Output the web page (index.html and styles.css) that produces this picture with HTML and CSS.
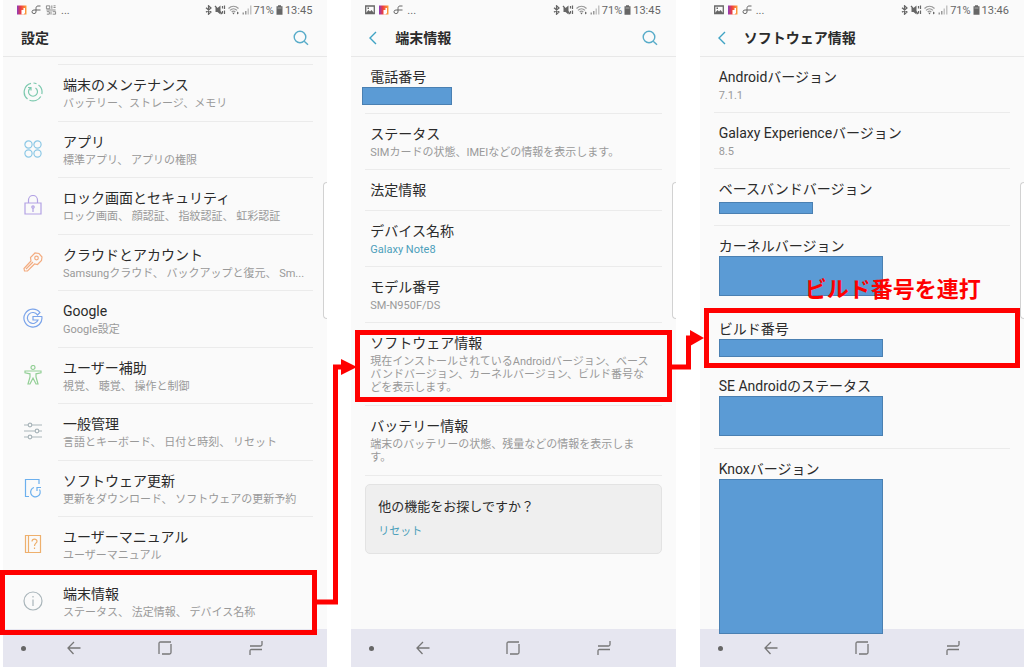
FILE: index.html
```
<!DOCTYPE html>
<html lang="ja">
  <head>
    <meta charset="utf-8">
    <title>端末情報</title>
    <link rel="stylesheet" href="styles.css">
  </head>

  <body>
    <!-- shared icons -->
    <svg class="sprite" aria-hidden="true">
      <symbol id="i-insta" viewBox="0 0 10 10">
        <linearGradient id="g" x1="0" y1="0" x2="1" y2="0">
          <stop offset="0" stop-color="#8a3ac0" />
          <stop offset="0.4" stop-color="#ee3d3c" />
          <stop offset="1" stop-color="#ffa63a" />
        </linearGradient>
        <path fill="url(#g)" d="M0 .5h9.500v9H0z" />
        <path fill="#fff" d="M4.500 5h2V3h1.500v5L6.500 9.500h-2z" />
      </symbol>
      <symbol id="i-note" viewBox="0 0 10 10">
        <path fill="none" stroke="#666" d="M9.500 1H7C5.500 1 5 2 5 3.500V7a2 1.800 0 1 1-2-2h6.500" />
      </symbol>
      <symbol id="i-pic" viewBox="0 0 10 10">
        <path fill="none" stroke="#666" stroke-width="1.300" d="M.7 1h8.600v7.500H.7z" />
        <path fill="#666" d="M1 8l2.500-3 1.500 1.500L6.500 5 9 8zM2.500 2.500h1.500V4H2.500z" />
      </symbol>
      <symbol id="i-bt" viewBox="0 0 7 10">
        <path fill="none" stroke="#666" stroke-width="1.200" d="M1 2.800l5 4.200-2.500 2.300V.7L6 3 1 7.200" />
      </symbol>
      <symbol id="i-mute" viewBox="0 0 11 10">
        <path fill="#666" d="M1 3h2l3-2.500v9L3 7H1z" />
        <path fill="none" stroke="#666" stroke-width="1.200" d="M.5 1l7 8M8 1v2.500M8 6v2.500M10 .5v3.500M10 5.500v3.500" />
      </symbol>
      <symbol id="i-wifi" viewBox="0 0 12 10">
        <path fill="none" stroke="#999" stroke-width="1.200" d="M.5 3.500c3-3 7-3 10 0M2 5.300c2-2 5-2 7 0M3.700 7c1-1 2.600-1 3.600 0" />
        <path fill="#666" d="M4.300 7.800h2.400L5.500 9.500zM9 6.500l2 1.500-2 1.500z" />
      </symbol>
      <symbol id="i-signal" viewBox="0 0 10 10">
        <path fill="#999" d="M.5 7.500h1.500v2H.5zM3 6h1.500v3.500H3z" />
        <path fill="#c4c4c4" d="M5.500 3.500h1.500v6H5.500zM8 .5h1.500v9H8z" />
      </symbol>
      <symbol id="i-battery" viewBox="0 0 7 10">
        <path fill="#666" d="M2 .3h3v1h1.500v8.400H.5V1.300H2z" />
        <path stroke="#aaa" d="M1.500 3h4" />
      </symbol>
      <symbol id="i-search" viewBox="0 0 16 16">
        <circle cx="7" cy="7" r="5.800" />
        <path d="M11.200 11.200l3.800 3.600" />
      </symbol>
      <symbol id="i-chevron" viewBox="0 0 8 14">
        <path d="M7 1L1 7l6 6" />
      </symbol>
      <symbol id="i-back" viewBox="0 0 14 14">
        <path d="M13.500 7H1M7 1L1 7l5.500 6" />
      </symbol>
      <symbol id="i-home" viewBox="0 0 14 14">
        <path d="M1 13V2.500C1 1.500 1.500 1 2.500 1H13M13 3v8.500c0 1-.5 1.500-1.500 1.500H4" />
      </symbol>
      <symbol id="i-recent" viewBox="0 0 14 14">
        <path d="M1 5h10.500c1 0 1.500-.5 1.500-1.500V0M13 8.500H2.500C1.500 8.500 1 9 1 10v4" />
      </symbol>
    </svg>

    <main class="screens">
      <section class="phone">
        <div class="status">
          <svg class="w10"><use href="#i-insta" /></svg>
          <svg class="w10"><use href="#i-note" /></svg>
          <svg class="w12" viewBox="0 0 12 12">
            <path fill="none" stroke="#777" d="M.5 1h4v3.500h-4zM7 .5v4M9 1h2.500M9 3h2.500M.5 6h11M1 8h3v3H1M6 7.500v4M8 8h3.500v3H8" />
          </svg>
          <span>...</span>
          <span class="status-right">
            <svg class="w7"><use href="#i-bt" /></svg>
            <svg class="w12"><use href="#i-mute" /></svg>
            <svg class="w12"><use href="#i-wifi" /></svg>
            <svg class="w10"><use href="#i-signal" /></svg>
            <span>71%</span>
            <svg class="w7"><use href="#i-battery" /></svg>
            <span>13:45</span>
          </span>
        </div>
        <header class="bar">
          <h1>設定</h1>
          <button class="search" aria-label="検索"><svg><use href="#i-search" /></svg></button>
        </header>
        <ul class="list settings">
          <li>
            <svg class="icon green" viewBox="0 0 20 20">
              <path d="M8 1.300A9 9 0 0 0 4.500 17M6.500 18.200a9 9 0 0 0 11.300-3.700M18.800 12A9 9 0 0 0 15.500 3M13.500 1.800a9 9 0 0 0-3-.8" />
              <path d="M12.500 6a4.500 4.500 0 1 1-5 0M5 5.500h3V8.500" />
            </svg>
            <a href="#"><span class="title">端末のメンテナンス</span><span class="sub">バッテリー、ストレージ、メモリ</span></a>
          </li>
          <li>
            <svg class="icon sky" viewBox="0 0 20 20">
              <circle cx="5.500" cy="5.500" r="3.600" /><circle cx="14.500" cy="5.500" r="3.600" />
              <circle cx="5.500" cy="14.500" r="3.600" /><circle cx="14.500" cy="14.500" r="3.600" />
            </svg>
            <a href="#"><span class="title">アプリ</span><span class="sub">標準アプリ、 アプリの権限</span></a>
          </li>
          <li>
            <svg class="icon violet" viewBox="0 0 20 20">
              <path d="M2 8h16v11H2zM5.500 8V5a4.500 4.500 0 0 1 9 0v3M10 13v4" />
              <circle cx="10" cy="12" r="1.200" />
            </svg>
            <a href="#"><span class="title">ロック画面とセキュリティ</span><span class="sub">ロック画面、 顔認証、 指紋認証、 虹彩認証</span></a>
          </li>
          <li>
            <svg class="icon orange" viewBox="0 0 20 20">
              <path d="M8 9L7.500 5.500 12 1l4 .5 3 3.500-.5 3.500-4 4-3-.5-7 7H1.500L1 16.500zM3 17l7-7" />
              <circle cx="13.500" cy="6" r="1.800" />
            </svg>
            <a href="#"><span class="title">クラウドとアカウント</span><span class="sub">Samsungクラウド、 バックアップと復元、 Sm...</span></a>
          </li>
          <li>
            <svg class="icon blue" viewBox="0 0 20 20">
              <path d="M17 4.500A9 9 0 1 0 18.800 8.500H10v3.500h5a5.500 5.500 0 1 1-.5-5z" />
            </svg>
            <a href="#"><span class="title">Google</span><span class="sub">Google設定</span></a>
          </li>
          <li>
            <svg class="icon leaf" viewBox="0 0 20 20">
              <circle cx="10" cy="2.500" r="2" />
              <path d="M2 6h16v1.800l-5 1V12l2 7h-2l-3-6-3 6H5l2-7V8.800l-5-1z" />
            </svg>
            <a href="#"><span class="title">ユーザー補助</span><span class="sub">視覚、 聴覚、 操作と制御</span></a>
          </li>
          <li>
            <svg class="icon grey" viewBox="0 0 20 20">
              <path d="M1 4h4M9 4h10M1 10h11M16 10h3M1 16h4M9 16h10" />
              <circle cx="7" cy="4" r="1.800" /><circle cx="14" cy="10" r="1.800" /><circle cx="7" cy="16" r="1.800" />
            </svg>
            <a href="#"><span class="title">一般管理</span><span class="sub">言語とキーボード、 日付と時刻、 リセット</span></a>
          </li>
          <li>
            <svg class="icon azure" viewBox="0 0 20 20">
              <path d="M16 6V1.500H2.500v17H6M11 9.500a4.800 4.800 0 1 0 5.500 2M14 13V9.500h4" />
            </svg>
            <a href="#"><span class="title">ソフトウェア更新</span><span class="sub">更新をダウンロード、 ソフトウェアの更新予約</span></a>
          </li>
          <li>
            <svg class="icon amber" viewBox="0 0 20 20">
              <path d="M2.500 1.500h15v17h-15zM5.500 1.500v17M9 7.500c0-3 5-3 5-.3 0 2-2.500 2-2.500 4.800M11.500 13.500V15" />
            </svg>
            <a href="#"><span class="title">ユーザーマニュアル</span><span class="sub">ユーザーマニュアル</span></a>
          </li>
          <li class="hit hit-device">
            <svg class="icon grey" viewBox="0 0 20 20">
              <circle cx="10" cy="10" r="9" />
              <path d="M10 8.500V15M10 5v1.500" />
            </svg>
            <a href="#"><span class="title">端末情報</span><span class="sub">ステータス、 法定情報、 デバイス名称</span></a>
          </li>
        </ul>
        <span class="edge"></span>
        <nav class="nav">
          <i class="dot"></i>
          <button aria-label="戻る"><svg><use href="#i-back" /></svg></button>
          <button aria-label="ホーム"><svg><use href="#i-home" /></svg></button>
          <button aria-label="履歴"><svg><use href="#i-recent" /></svg></button>
        </nav>
      </section>

      <section class="phone">
        <div class="status">
          <svg class="w10"><use href="#i-pic" /></svg>
          <svg class="w10"><use href="#i-insta" /></svg>
          <svg class="w10"><use href="#i-note" /></svg>
          <span>...</span>
          <span class="status-right">
            <svg class="w7"><use href="#i-bt" /></svg>
            <svg class="w12"><use href="#i-mute" /></svg>
            <svg class="w12"><use href="#i-wifi" /></svg>
            <svg class="w10"><use href="#i-signal" /></svg>
            <span>71%</span>
            <svg class="w7"><use href="#i-battery" /></svg>
            <span>13:45</span>
          </span>
        </div>
        <header class="bar">
          <button class="back" aria-label="戻る"><svg><use href="#i-chevron" /></svg></button>
          <h1>端末情報</h1>
          <button class="search" aria-label="検索"><svg><use href="#i-search" /></svg></button>
        </header>
        <ul class="list">
          <li><span class="title">電話番号</span><span class="mask mask-phone"></span></li>
          <li><a href="#"><span class="title">ステータス</span><span class="sub">SIMカードの状態、IMEIなどの情報を表示します。</span></a></li>
          <li><a href="#"><span class="title">法定情報</span></a></li>
          <li><a href="#"><span class="title">デバイス名称</span><span class="sub accent">Galaxy Note8</span></a></li>
          <li><span class="title">モデル番号</span><span class="sub">SM-N950F/DS</span></li>
          <li class="hit hit-software">
            <a href="#"><span class="title">ソフトウェア情報</span><span class="sub long">現在インストールされているAndroidバージョン、ベースバンドバージョン、カーネルバージョン、ビルド番号などを表示します。</span></a>
            <svg class="arrow arrow-in" viewBox="0 0 40 247">
              <path class="line" d="M0 243h18.500V8H26" />
              <path class="head" d="M24 0l16 8-16 8z" />
            </svg>
            <svg class="arrow arrow-out" viewBox="0 0 32 41">
              <path class="line" d="M0 37h16.500V8H20" />
              <path class="head" d="M18 0l14 8-14 8z" />
            </svg>
          </li>
          <li><a href="#"><span class="title">バッテリー情報</span><span class="sub long">端末のバッテリーの状態、残量などの情報を表示します。</span></a></li>
        </ul>
        <aside class="card">
          <h2>他の機能をお探しですか？</h2>
          <a class="accent" href="#">リセット</a>
        </aside>
        <span class="edge"></span>
        <nav class="nav">
          <i class="dot"></i>
          <button aria-label="戻る"><svg><use href="#i-back" /></svg></button>
          <button aria-label="ホーム"><svg><use href="#i-home" /></svg></button>
          <button aria-label="履歴"><svg><use href="#i-recent" /></svg></button>
        </nav>
      </section>

      <section class="phone">
        <div class="status">
          <svg class="w10"><use href="#i-pic" /></svg>
          <svg class="w10"><use href="#i-insta" /></svg>
          <svg class="w10"><use href="#i-note" /></svg>
          <span>...</span>
          <span class="status-right">
            <svg class="w7"><use href="#i-bt" /></svg>
            <svg class="w12"><use href="#i-mute" /></svg>
            <svg class="w12"><use href="#i-wifi" /></svg>
            <svg class="w10"><use href="#i-signal" /></svg>
            <span>71%</span>
            <svg class="w7"><use href="#i-battery" /></svg>
            <span>13:46</span>
          </span>
        </div>
        <header class="bar">
          <button class="back" aria-label="戻る"><svg><use href="#i-chevron" /></svg></button>
          <h1>ソフトウェア情報</h1>
        </header>
        <ul class="list">
          <li><span class="title">Androidバージョン</span><span class="sub">7.1.1</span></li>
          <li><span class="title">Galaxy Experienceバージョン</span><span class="sub">8.5</span></li>
          <li><span class="title">ベースバンドバージョン</span><span class="mask mask-baseband"></span></li>
          <li class="tall"><span class="title">カーネルバージョン</span><span class="mask mask-block"></span></li>
          <li class="hit hit-build">
            <strong class="callout">ビルド番号を連打</strong>
            <span class="title">ビルド番号</span><span class="mask mask-line"></span>
          </li>
          <li class="tall"><span class="title">SE Androidのステータス</span><span class="mask mask-block"></span></li>
          <li class="knox"><span class="title">Knoxバージョン</span><span class="mask mask-knox"></span></li>
        </ul>
        <span class="edge"></span>
        <nav class="nav">
          <i class="dot"></i>
          <button aria-label="戻る"><svg><use href="#i-back" /></svg></button>
          <button aria-label="ホーム"><svg><use href="#i-home" /></svg></button>
          <button aria-label="履歴"><svg><use href="#i-recent" /></svg></button>
        </nav>
      </section>
    </main>
  </body>
</html>
```
FILE: styles.css
```
* {
  box-sizing: border-box;
}
body {
  margin: 0;
  background: #fff;
  color: #2b2b2b;
  font-family: Roboto, "Noto Sans CJK JP", sans-serif;
  font-size: 14px;
}
a {
  color: inherit;
  text-decoration: none;
}
button {
  display: flex;
  padding: 0;
  border: 0;
  background: none;
  cursor: pointer;
}
svg {
  display: block;
  fill: none;
  flex: none;
}
.sprite {
  position: absolute;
  width: 0;
  height: 0;
}
.screens {
  display: grid;
  grid-template-columns: repeat(3, minmax(0, 1fr));
  gap: 24px;
  padding-left: 3px;
  min-height: 100vh;
}
.phone {
  position: relative;
  display: flex;
  flex-direction: column;
  background: #fafafa;
}

/* status bar */
.status {
  display: flex;
  align-items: center;
  gap: 4px;
  height: 20px;
  padding: 0 15px 0 14px;
  color: #666;
  font-size: 11px;
}
.status svg {
  height: 10px;
}
.status-right {
  display: flex;
  align-items: center;
  gap: 2px;
  margin-left: auto;
}
.w7 {
  width: 7px;
}
.w10 {
  width: 10px;
}
.w12 {
  width: 12px;
}

/* title bar */
.bar {
  display: flex;
  align-items: center;
  height: 37px;
  padding: 0 18px;
  border-bottom: 1px solid #e8e8e8;
}
.bar h1 {
  margin: 0;
  font-size: 14px;
  line-height: 22px;
}
.back {
  width: 26px;
  stroke: #3fa3c4;
  stroke-width: 1.4;
}
.back svg {
  width: 8px;
  height: 14px;
}
.search {
  margin-left: auto;
  stroke: #58acc9;
  stroke-width: 1.4;
}
.search svg {
  width: 16px;
  height: 16px;
}

/* rows */
.list {
  margin: 0;
  padding: 0 14px;
  list-style: none;
}
.list li {
  position: relative;
  min-height: 41px;
  padding: 9px 8px 8px 5px;
  border-bottom: 1px solid #ebebeb;
}
.title {
  display: block;
  line-height: 22px;
}
.sub {
  display: block;
  padding: 1px 0 2px;
  color: #999;
  font-size: 11px;
  line-height: 13px;
}
.long {
  padding-bottom: 3px;
}
.accent {
  color: #4c9fba;
}
.settings {
  flex: 1;
  display: flex;
  flex-direction: column;
  padding-top: 7px;
}
.settings li {
  flex: 1;
  margin-left: 41px;
  border-top: 1px solid #ebebeb;
  border-bottom: 0;
  white-space: nowrap;
}
.icon {
  position: absolute;
  left: -35px;
  top: 17px;
  width: 20px;
  height: 20px;
  stroke-width: 1.2;
}
.green { stroke: #7cc9ae; }
.sky { stroke: #8cc8e6; }
.violet { stroke: #b3a2e4; }
.orange { stroke: #f3ac80; }
.blue { stroke: #7ba4ea; }
.leaf { stroke: #93cf96; }
.grey { stroke: #a9b5ba; }
.azure { stroke: #6cb0ee; }
.amber { stroke: #eeb06d; }

/* hidden values */
.mask {
  display: block;
  width: 164px;
  margin-top: -1px;
  background: #5b9bd5;
  border: 1px solid #4a80b2;
}
.mask-phone {
  width: 90px;
  height: 18px;
  margin-left: -8px;
}
.mask-baseband {
  width: 94px;
  height: 12px;
  margin: 2px 0 3px;
}
.mask-line {
  height: 18px;
}
.mask-block {
  height: 40px;
}
.list .tall {
  min-height: 83px;
}
.list .knox {
  margin-bottom: -20px;
  border: 0;
  z-index: 1;
}
.mask-knox {
  height: 155px;
}

/* help card */
.card {
  margin: 8px 14px;
  padding: 12px;
  border: 1px solid #e3e3e3;
  border-radius: 5px;
  background: #efefef;
}
.card h2 {
  margin: 0 0 6px;
  font-size: 13px;
  font-weight: 400;
  line-height: 20px;
}
.card a {
  display: block;
  font-size: 11px;
  line-height: 18px;
}

/* edge panel handle */
.edge {
  position: absolute;
  top: 182px;
  right: 0;
  width: 4px;
  height: 137px;
  border: 1px solid #d2d2d2;
  border-right: 0;
  border-radius: 5px 0 0 5px;
  background: #fff;
}

/* navigation bar */
.nav {
  display: grid;
  grid-template-columns: 26px 1fr 1fr 1fr;
  align-items: center;
  justify-items: center;
  height: 38px;
  margin-top: auto;
  padding-right: 26px;
  background: #e6e6f0;
  stroke: #777;
  stroke-width: 1.3;
}
.nav button {
  stroke: inherit;
}
.nav svg {
  width: 14px;
  height: 14px;
}
.dot {
  justify-self: end;
  width: 5px;
  height: 5px;
  margin-right: 3px;
  border-radius: 50%;
  background: #666;
}

/* red marks */
.hit {
  z-index: 2;
}
.hit::after {
  content: "";
  position: absolute;
  border: 5px solid #f00;
  pointer-events: none;
}
.hit-device::after {
  inset: -4px -4px -6px -58px;
}
.hit-software::after {
  inset: 7px -10px 3px;
}
.hit-build::after {
  inset: -1px -10px -3px;
}
.arrow {
  position: absolute;
}
.arrow-in {
  left: -48px;
  top: 36px;
  width: 40px;
  height: 247px;
}
.arrow-out {
  left: calc(100% + 10px);
  top: 7px;
  width: 32px;
  height: 41px;
}
.line {
  stroke: #f00;
  stroke-width: 5;
}
.head {
  fill: #f00;
}
.callout {
  position: absolute;
  left: 91px;
  bottom: 100%;
  padding-bottom: 4px;
  color: #f00;
  font-size: 22px;
  line-height: 30px;
  white-space: nowrap;
}
```
